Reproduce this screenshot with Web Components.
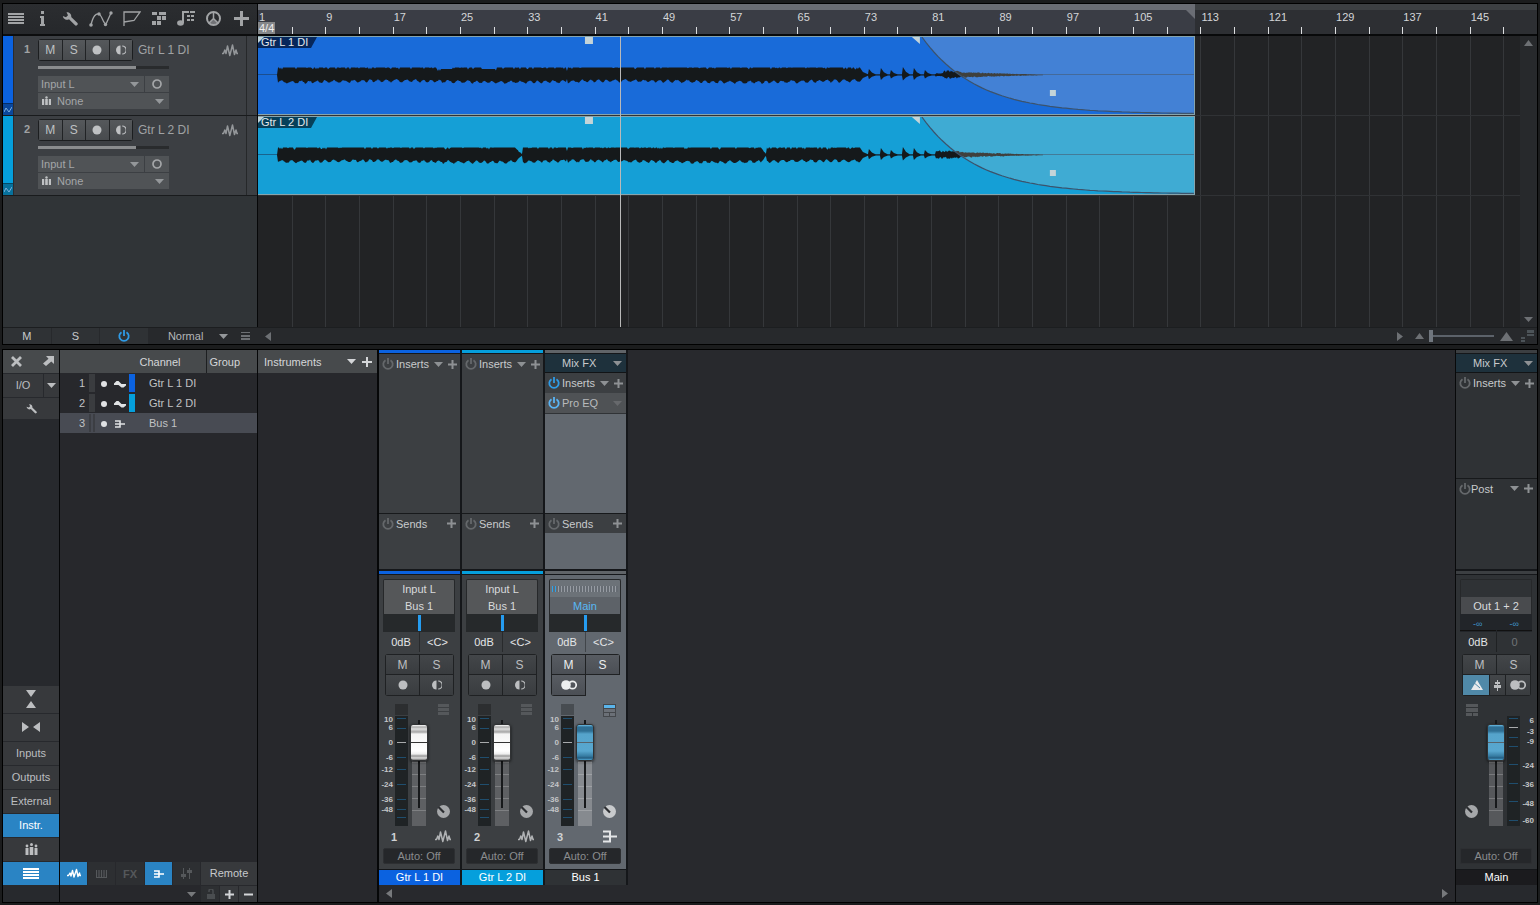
<!DOCTYPE html>
<html lang="en">
<head>
<meta charset="utf-8">
<title>Song – Arrange and Mix</title>
<style>
html, body { margin: 0; height: 100%; background: #1b1c1d; }
body { font: 11px/14px "Liberation Sans", Arial, sans-serif; color: #c8cacc; }
</style>
</head>
<body>
<daw-app></daw-app>
<script>
const RESET = `
*, *::before, *::after { box-sizing: border-box; }
:host { box-sizing: border-box; display: block; }
button, select, input { font: inherit; color: inherit; background: none; border: 0; border-radius: 0; margin: 0; padding: 0; outline: 0; }
button { display: flex; align-items: center; justify-content: center; }
select, input { appearance: none; -webkit-appearance: none; }
`;
function define(name, css, markup, setup) {
  customElements.define(name, class extends HTMLElement {
    connectedCallback() {
      if (this.shadowRoot) return;
      const root = this.attachShadow({ mode: "open" });
      const t = document.createElement("template");
      t.innerHTML = `<style>${RESET}${css}</style>` + (typeof markup === "function" ? markup(this) : markup);
      root.append(t.content.cloneNode(true));
      if (setup) setup(this, root);
    }
  });
}
const attr = (el, n, d = "") => el.getAttribute(n) ?? d;

/* ---------- icons: [width, height, markup] ---------- */
const S = 'fill="none" stroke="currentColor"';
const ICONS = {
  menu: [16, 11, '<path d="M0 0h16v2H0zM0 3h16v2H0zM0 6h16v2H0zM0 9h16v2H0z"/>'],
  info: [5, 15, '<path d="M1 0h3v3H1zM0 5h4v8h1v2H0v-2h1V7H0z"/>'],
  wrench: [16, 15, `<path d="M4.500 1.300A4 4 0 0 1 9.200 6l6 5.700a1.600 1.600 0 0 1-2.400 2.400L7 8.300A4.200 4.200 0 0 1 .800 5L4 6.200 6 4.200z"/>`],
  curve: [24, 16, `<path ${S} stroke-width="1.300" d="M2 14C4 5 7 2 10 3C13 4 14 13 17 13L22 2"/><g><circle cx="2" cy="14" r="1.800"/><circle cx="10" cy="3" r="1.700"/><circle cx="16.500" cy="13.500" r="1.700"/><circle cx="22" cy="2" r="1.700"/></g>`],
  flag: [18, 15, `<path ${S} stroke-width="1.300" d="M1 15V1H17L11 9.500L1 11"/>`],
  pattern: [14, 15, '<path d="M0 1h5v3H0zM7 1h7v3H7zM5 5h4v4H5zM10 5h4v4h-4zM0 10h4v4H0zM5 10h4v4H5z"/>'],
  note: [18, 15, '<ellipse cx="3.500" cy="12" rx="3.400" ry="2.700"/><path d="M5 0h2v12H5zM6 0h4v2H6zM9 0h3v2H9zM13 0h5v2h-5zM10 4h3v2h-3zM14 4h3v2h-3zM10 8h3v2h-3zM14 8h3v2h-3z"/>'],
  dial: [15, 15, `<circle cx="7.500" cy="7.500" r="6.500" ${S} stroke-width="2"/><path ${S} stroke-width="1.500" d="M7.500 1V8M3 12L7.500 7.500L12 12"/><path opacity=".6" d="M7.500 7.500L12 12A6 6 0 0 1 3 12z"/>`],
  plus: [15, 15, '<path d="M6 0h3v6h6v3H9v6H6V9H0V6h6z"/>'],
  plusS: [9, 9, '<path d="M3.500 0h2v3.500H9v2H5.500V9h-2V5.500H0v-2h3.500z"/>'],
  plusT: [10, 10, '<path d="M4 0h2v4h4v2H6v4H4V6H0V4h4z"/>'],
  minus: [9, 9, '<path d="M0 3.500h9v2H0z"/>'],
  wave: [16, 13, `<path ${S} stroke-width="1.500" stroke-linejoin="round" d="M0 9.500H1.500L2.800 6L4 9.500L5.500 2L7.800 11.500L10.500 1L12.500 10.500L14 6L15 9.500H16"/>`],
  waveT: [14, 11, `<path ${S} stroke-width="1.400" stroke-linejoin="round" d="M0 7.500H1.500L3 5L4 8L5.500 2.500L7 9L9.500 1.500L11 8.500L12.500 5L13 7.500H14"/>`],
  waveS: [12, 8, '<path d="M0 3.500L2.500 1H4.500L7.500 4H12V5.500L9.500 7.500H7.500L4.500 5H0z"/>'],
  zig: [8, 8, `<path ${S} stroke-width="1" d="M0 6L2 2L5 6L8 1"/>`],
  dot: [10, 10, '<circle cx="5" cy="5" r="4.500"/>'],
  dotS: [6, 6, '<circle cx="3" cy="3" r="3"/>'],
  half: [10, 10, `<path d="M4.500 .500a4.500 4.500 0 0 0 0 9z"/><path ${S} stroke-width="1.200" d="M6.200 1a4 4 0 0 1 0 8"/>`],
  ring: [10, 10, `<circle cx="5" cy="5" r="4" ${S} stroke-width="1.700"/>`],
  rings: [16, 10, `<circle cx="5" cy="5" r="4.800"/><circle cx="11.500" cy="5" r="3.700" ${S} stroke-width="1.700"/>`],
  people: [9, 10, '<circle cx="4.500" cy="1.500" r="1.200"/><path d="M0 3h2.200v6H0zM3.200 3h2.600v6H3.200zM6.800 3H9v6H6.800z"/>'],
  people2: [13, 12, '<circle cx="2" cy="3" r="1.400"/><circle cx="6.500" cy="1.500" r="1.500"/><circle cx="11" cy="3" r="1.400"/><path d="M.500 5h3v7h-3zM4.700 4h3.600v8H4.700zM9.500 5h3v7h-3z"/>'],
  down: [9, 5, '<path d="M0 0h9L4.500 5z"/>'],
  up: [9, 6, '<path d="M0 6h9L4.500 0z"/>'],
  upL: [13, 9, '<path d="M0 9h13L6.500 0z"/>'],
  left: [6, 9, '<path d="M6 0v9L0 4.500z"/>'],
  right: [6, 9, '<path d="M0 0v9l6-4.500z"/>'],
  power: [12, 12, `<path ${S} stroke-width="1.800" d="M3.500 2.200A4.700 4.700 0 1 0 8.500 2.200M6 0V6"/>`],
  close: [11, 11, `<path ${S} stroke-width="2.800" d="M1 1L10 10M10 1L1 10"/>`],
  arrow: [11, 10, '<path d="M3 0H11V8L8.300 5.500L3 10L0 7.500L5.500 2.700z"/>'],
  bus: [11, 8, `<path ${S} stroke-width="1.600" d="M1 1H6V7H1M1 4H11"/>`],
  busL: [15, 13, `<path ${S} stroke-width="2" d="M1 1.500H8V11.500H1M1 6.500H15"/>`],
  vert: [10, 18, '<path d="M0 0h10L5 7zM0 18h10L5 11z"/>'],
  horz: [18, 10, '<path d="M0 0v10l7-5zM18 0v10l-7-5z"/>'],
  keys: [11, 8, `<path ${S} stroke-width="1.200" d="M.500 0V7.500H10.500V0M3 0V7M5.500 0V7M8 0V7"/>`],
  faders: [13, 11, `<path ${S} stroke-width="1" d="M3.500 0V11M9.500 0V11"/><path d="M1 6h5v3H1zM7 2h5v3H7z"/>`],
  lock: [9, 10, `<path d="M1 5h8v5H1z"/><path ${S} stroke-width="1.500" d="M3 3V2A2 2 0 0 1 7 2V5"/>`],
  list: [9, 8, '<path d="M0 0h9v1H0zM0 3h9v2H0zM0 6h9v2H0z"/>'],
  views: [13, 12, '<path d="M6 0h7v3H6zM6 4h7v2H6zM0 7h4v2H0zM0 10h4v2H0z"/>'],
  rack: [11, 11, '<path d="M0 0h11v3H0zM0 4h11v3H0zM0 8h11v3H0z"/>'],
  rackBus: [13, 13, '<path fill="#44474b" d="M0 0h13v13H0z"/><path fill="#5ab4ea" d="M1 1h11v3H1z"/><path fill="#6b7077" d="M1 5h11v3H1zM1 9h5v3H1zM7 9h5v3H7z"/>'],
  rackMain: [12, 12, '<path d="M0 0h12v3H0zM0 4h12v4H0zM0 9h6v3H0zM7 9h5v3H7z"/>'],
  knob: [13, 13, '<circle cx="6.500" cy="6.500" r="6.500"/><path stroke="#2c2e31" stroke-width="2.200" d="M1.500 2L7 7.500"/>'],
  metro: [13, 10, '<path d="M7 0L13 10H1L4 5z"/><path stroke="#5089a8" d="M2 1L10 8"/>'],
  plug: [7, 11, '<path d="M3 0h1v2h2v2H4v1h3v3H4v3H3V8H0V5h3V4H1V2h2z"/>'],
};
define("daw-icon", `:host{display:inline-flex;flex:none}svg{display:block;fill:currentColor}`, el => {
  const [w, h, m] = ICONS[attr(el, "name")];
  return `<svg width="${w}" height="${h}" viewBox="0 0 ${w} ${h}" aria-hidden="true">${m}</svg>`;
});
const ic = n => `<daw-icon name="${n}"></daw-icon>`;

/* ---------- drop-down with an arrow ---------- */
define("menu-select", `
:host{display:grid;grid-template-columns:1fr auto;align-items:center;height:16px;background:#505356;color:#a4a6a8}
select{grid-area:1/1/2/3;width:100%;height:100%;padding-left:var(--pad,3px)}
daw-icon{grid-area:1/2;margin-right:5px;color:#94979a;pointer-events:none}
.lead{grid-area:1/1;margin-left:4px;justify-self:start;color:#c0c2c4}`,
el => `<select aria-label="${attr(el, "label")}"><option>${attr(el, "value")}</option></select>
${el.hasAttribute("icon") ? `<daw-icon class="lead" name="${attr(el, "icon")}"></daw-icon>` : ""}${ic("down")}`);

/* ---------- arrange: toolbar and track headers ---------- */
define("track-toolbar", `
:host{display:grid;grid-template-columns:26px 27px 27px 35px 27px 28px 26px 28px 28px;align-items:center;height:32px;padding-bottom:1px;background:linear-gradient(#2b2d30,#26282b);border-bottom:2px solid #0c0d0e;color:#a2a4a6}`,
["menu:Menu", "info:Info", "wrench:Tools", "curve:Automation", "flag:Markers", "pattern:Patterns", "note:Score", "dial:Tempo", "plus:Add track"]
  .map(s => s.split(":")).map(([n, l]) => `<button aria-label="${l}">${ic(n)}</button>`).join(""));

define("track-header", `
:host{display:grid;grid-template-columns:10px 25px 1fr 10px;height:80px;background:#3c3f43;border-bottom:1px solid #191b1d}
.color{display:flex;flex-direction:column;justify-content:flex-end;background:var(--c);overflow:hidden}
.color span{display:flex;justify-content:center;align-items:center;height:12px;background:var(--d);color:#7fb0dc;border-top:1px solid #0005}
.num{padding:6px 0 0 10px;font-weight:bold;color:#a0a2a4;border-left:1px solid #2a2c30}
.main{padding-top:3px;border-right:1px solid #26282a}
.top{display:flex;align-items:center;height:22px}
.group{display:flex;gap:1px;background:#212325;border:1px solid #1c1e20;border-radius:3px;width:95px;height:22px}
.group button{flex:1;background:linear-gradient(#55585b,#484b4e);font-size:12px;color:#bfc1c3;padding-bottom:1px}
.name{flex:1;padding-left:5px;font-size:12px;color:#a0a2a4}
.top > daw-icon{margin-right:8px;color:#94979a}
input{display:block;width:131px;height:3px;margin:5px 0 7px;background:linear-gradient(90deg,#8a8c8e 75%,#292b2d 75%)}
input::-webkit-slider-thumb{-webkit-appearance:none;width:1px;height:3px}
.io{display:grid;grid-template-columns:106px 24px;gap:1px;width:131px}
.io menu-select:last-child{grid-column:1/3;--pad:19px}
.io button{background:#505356;color:#a4a6a8}`,
el => `<div class="color"><span>${ic("zig")}</span></div><div class="num">${attr(el, "num")}</div>
<div class="main"><div class="top"><div class="group"><button>M</button><button>S</button><button aria-label="Record">${ic("dot")}</button><button aria-label="Monitor">${ic("half")}</button></div>
<span class="name">${attr(el, "name")}</span>${ic("wave")}</div>
<input type="range" value="75" aria-label="Volume">
<div class="io"><menu-select label="Input" value="Input L"></menu-select><button aria-label="Mono">${ic("ring")}</button><menu-select label="Group" value="None" icon="people"></menu-select></div></div>`);

/* ---------- timeline ---------- */
const STEPS = 38;
define("time-ruler", `
:host{display:grid;grid-template:6px 26px/minmax(0,1fr);height:32px;overflow:hidden;background:#2e3033;border-bottom:2px solid #08090a;position:relative}
.range{background:#3c3f42}
.range i{display:block;width:73.250%;height:6px;background:#6a6d74}
.ticks{display:grid;grid-template-columns:repeat(${STEPS},minmax(0,1fr));background:linear-gradient(90deg,#3a3d45 73.250%,#2d2f33 73.250%)}
.ticks div{position:relative;padding-left:1px;white-space:nowrap;color:#d4d6d8;line-height:14px}
.ticks div::before{content:"";position:absolute;left:0;bottom:0;width:1px;height:9px;background:#dcdee0}
.sig{position:absolute;left:0;bottom:0;width:17px;height:12px;padding-left:1px;background:#858789;color:#f0f0f0;line-height:12px}
.end{position:absolute;left:calc(73.250% - 9px);top:6px;border-top:9px solid #6a6d74;border-left:9px solid transparent}`,
`<div class="range"><i></i></div><div class="ticks">${Array.from({ length: STEPS }, (_, i) => `<div>${i % 2 ? "" : i * 4 + 1}</div>`).join("")}</div><span class="sig">4/4</span><span class="end"></span>`);

/* Loudness envelopes: [x, upper, lower] in clip units */
function wavePath(variant) {
  let seed = variant * 7919 + 13;
  const rnd = () => (seed = (seed * 16807) % 2147483647) / 2147483647;
  const up = [], lo = [], mid = 38;
  const add = (x, a, b) => { up.push(`${x} ${(mid - a).toFixed(1)}`); lo.unshift(`${x} ${(mid + b).toFixed(1)}`); };
  add(19, 0, 0);
  for (let x = 20; x <= 602; x += 1) {
    let a = 7.5 - (rnd() > .8 ? 2 * rnd() : 0), b = 6.4 + Math.sin(x / 1.4 + Math.sin(x / 9)) * 1.3 + Math.sin(x / 37 + variant) * .7 + rnd() * 1.3 - .6;
    if (variant === 1 && (x > 170 && x < 262) && Math.sin(x / 7) > .5) a -= 1.5;
    if (variant === 2 && ((x > 257 && x < 265) || (x > 503 && x < 509))) { const k = x < 300 ? (265 - x) / 8 : (509 - x) / 6; a *= k; b *= k; }
    if (x === 309) { a = 4; b = 4; }
    add(x, a, b);
  }
  add(605, 3, 3); add(610, .8, .8);
  for (const [x, h] of [[611, 6], [623, 7], [633, 5], [645, 8], [656, 7], [667, 5]]) { add(x - 1, .5, .5); add(x, h, h * .7); add(x + 3, h * .4, h * .3); add(x + 7, .4, .4); }
  add(677, .5, .5);
  for (let x = 678; x < 786; x++) {
    let h = x < 686 ? (variant === 1 ? 2 : 4.5) : x < 702 ? 4.2 : 3.2 * (1 - (x - 702) / 90);
    add(x, Math.max(.3, h * (.6 + rnd() * .5)), Math.max(.3, h * (.4 + rnd() * .5)));
  }
  return `M${up.join("L")}L${lo.join("L")}Z`;
}
function fadePoints() {
  const p = [];
  for (let x = 0; x <= 272; x += 4) p.push(`${664 + x} ${(77 * (1 - Math.exp(-.018 * x))).toFixed(1)}`);
  return p.join("L");
}
define("audio-clip", `
:host{position:relative;height:79px;background:var(--c);border:1px solid #86a4ad;border-width:1px 1px 1px 0}
svg{display:block;width:100%;height:77px}
span{position:absolute;left:0;top:0;width:59px;height:11px;padding-left:3px;line-height:10px;background:var(--d);color:#e4e8ea;clip-path:polygon(0 0,100% 0,53px 100%,0 100%)}
b{position:absolute;left:0;top:0;border-top:6px solid #c4d4d8;border-right:6px solid transparent}`,
el => { const f = fadePoints(); return `<svg viewBox="0 0 936 77" preserveAspectRatio="none" aria-hidden="true">
<path d="M0 37.500H936" stroke="#1c3a5c" stroke-opacity=".6"/>
<path d="${wavePath(+attr(el, "num"))}" fill="#15191b"/>
<path d="M${f}L936 0Z" fill="#ecdeca" fill-opacity=".2"/>
<path d="M${f}" fill="none" stroke="#3c536c" stroke-width="1.200"/>
<path d="M327 0h8v7h-8zM654 0h8v7zM792 53h6v6h-6z" fill="#c4d4d8"/></svg><span>${attr(el, "name")}</span><b></b>`; });

define("arrange-view", `
:host{display:grid;grid-template-columns:minmax(0,1fr) 17px;flex:1;min-width:0;min-height:291px;background:#222325}
.clipbox{position:relative;overflow:hidden}
.field{position:relative;width:calc(100% + 17px);height:100%;display:flex;flex-direction:column}
.lines{position:absolute;inset:0;display:grid;grid-template-columns:repeat(${STEPS},minmax(0,1fr))}
.lines i{border-left:1px solid #35373a}
.lines i:first-child{border:0}
.lane{position:relative;height:80px;border-bottom:1px solid #303235}
.lane audio-clip{width:73.250%}
.head{position:absolute;left:28.300%;top:0;bottom:0;width:1px;background:#b9b9b9}
.bar{display:flex;flex-direction:column;justify-content:space-between;align-items:center;padding:4px 0 5px;background:#27292c;color:#6d7074}`,
`<div class="clipbox"><div class="field"><div class="lines">${"<i></i>".repeat(STEPS)}</div>
<div class="lane"><audio-clip num="1" name="Gtr L 1 DI" style="--c:#196bd9;--d:#06275b"></audio-clip></div>
<div class="lane"><audio-clip num="2" name="Gtr L 2 DI" style="--c:#159fd6;--d:#06405a"></audio-clip></div><div class="head"></div></div></div>
<div class="bar"><button aria-label="Scroll up">${ic("up")}</button><button aria-label="Scroll down">${ic("down")}</button></div>`);

define("arrange-footer", `
:host{display:flex;height:17px;background:#27292c;border-top:1px solid #1c1e20}
.left{display:flex;width:255px;flex:none}
.left button{width:48px;margin-right:1px;background:#2f3235;color:#c8cacc}
.left button.on{color:#2f9be6}
menu-select{width:85px;background:none;--pad:19px;height:16px;color:#b4b6b8}
.left button.v{width:24px;background:none;color:#6d7074}
.right{display:flex;flex:1;align-items:center;color:#6d7074;padding:0 3px 0 7px}
.sp{flex:1}
.zoom{width:65px;height:12px;margin:0 6px 0 5px;background:linear-gradient(#5c626a,#5c626a) 0 5px/100% 2px no-repeat}
.zoom::-webkit-slider-thumb{-webkit-appearance:none;width:4px;height:12px;background:#70767e}
.vw{margin-left:8px;color:#4c5358}.rt{margin-right:12px}`,
`<div class="left"><button>M</button><button>S</button><button class="on" aria-label="Power">${ic("power")}</button><menu-select label="Automation mode" value="Normal"></menu-select><button class="v" aria-label="Track list">${ic("list")}</button></div>
<div class="right"><button aria-label="Scroll left">${ic("left")}</button><span class="sp"></span><button class="rt" aria-label="Scroll right">${ic("right")}</button>${ic("up")}<input class="zoom" type="range" value="0" aria-label="Zoom">${ic("upL")}<button class="vw" aria-label="Views">${ic("views")}</button></div>`);

/* ---------- mixer: side navigation and channel list ---------- */
define("mixer-nav", `
:host{display:flex;flex-direction:column;gap:1px;width:57px;background:#27292d;border-right:1px solid #060708;padding-bottom:17px}
button{height:23px;padding-bottom:1px;background:#37393c;color:#bcbec0}
.row{display:flex;gap:1px}
.row button:first-child{flex:1}
.row.a{background:#474a4c;justify-content:space-between}
.row.a button{flex:none;width:26px;background:none}.a button:last-child{width:22px}
.b button:last-child{width:15px}
.tall{height:27px}.short{height:21px}
.sp{flex:1}
.on{background:#2a84c4;color:#fff}`,
`<div class="row a"><button aria-label="Close">${ic("close")}</button><button aria-label="Detach">${ic("arrow")}</button></div>
<div class="row b"><button>I/O</button><button aria-label="I/O menu">${ic("down")}</button></div>
<button class="short" aria-label="Options"><svg width="11" height="11" viewBox="0 0 16 15" fill="currentColor"><path d="M4.500 1.300A4 4 0 0 1 9.200 6l6 5.700a1.600 1.600 0 0 1-2.400 2.400L7 8.300A4.200 4.200 0 0 1 .800 5L4 6.200 6 4.200z"/></svg></button>
<span class="sp"></span>
<button class="tall" aria-label="Narrow height">${ic("vert")}</button><button class="tall" aria-label="Narrow width">${ic("horz")}</button>
<button>Inputs</button><button>Outputs</button><button>External</button><button class="on">Instr.</button><button aria-label="Groups">${ic("people2")}</button><button class="on" aria-label="Channel list">${ic("menu")}</button>`);

define("channel-list", `
:host{display:flex;flex-direction:column;width:198px;background:#27282c;border-right:1px solid #060708}
table{border-collapse:collapse;width:100%;table-layout:fixed}
th,td{padding:0;text-align:left;font-weight:normal;height:20px}
thead tr{background:#474a4c}
th{height:23px;color:#d4d6d8}
th.ch{text-align:right;padding-right:25px;border-right:1px solid #1d1f21}
th.g{padding-left:3px}
td.n{text-align:right;padding-right:4px}
td.m span{display:block;width:6px;height:18px;background:#3a3c3f}
td .c{display:block;width:6px;height:18px;background:var(--c)}
td{color:#c0c2c4}
td daw-icon{vertical-align:middle;color:#e0e2e4}
tr.sel{background:#484b53}
.sel .m span{border:solid #3c3e43;border-width:0 2px;background:none}
.sp{flex:1}
.f{display:flex;gap:1px;height:23px}
.f button{flex:1;background:#2d2f32;color:#55585b;font-weight:bold}
.f button.on{background:#2a84c4;color:#fff}
.f button.r{flex:0 0 56px;background:#37393c;color:#c8cacc;font-weight:normal;padding-bottom:1px}
.z{display:flex;gap:1px;height:17px;justify-content:flex-end;padding-top:1px}
.z button{width:18px;background:#37393c;color:#d4d6d8}
.z button.d{background:none;color:#77797c}.z button.k{background:#2d2f32;color:#4a4d50}`,
`<table><colgroup><col style="width:29px"><col style="width:12px"><col style="width:13px"><col style="width:15px"><col style="width:20px"><col style="width:57px"><col></colgroup>
<thead><tr><th class="ch" colspan="6">Channel</th><th class="g">Group</th></tr></thead><tbody>
<tr><td class="n">1</td><td class="m"><span></span></td><td>${ic("dotS")}</td><td>${ic("waveS")}</td><td><span class="c" style="--c:#0b62e0"></span></td><td colspan="2">Gtr L 1 DI</td></tr>
<tr><td class="n">2</td><td class="m"><span></span></td><td>${ic("dotS")}</td><td>${ic("waveS")}</td><td><span class="c" style="--c:#059fdc"></span></td><td colspan="2">Gtr L 2 DI</td></tr>
<tr class="sel"><td class="n">3</td><td class="m"><span></span></td><td>${ic("dotS")}</td><td>${ic("bus")}</td><td></td><td colspan="2">Bus 1</td></tr></tbody></table>
<span class="sp"></span>
<div class="f"><button class="on" aria-label="Audio tracks">${ic("waveT")}</button><button aria-label="Instruments">${ic("keys")}</button><button>FX</button><button class="on" aria-label="Buses">${ic("bus")}</button><button aria-label="VCA">${ic("faders")}</button><button class="r">Remote</button></div>
<div class="z"><button class="d" aria-label="Scenes">${ic("down")}</button><button class="k" aria-label="Lock">${ic("lock")}</button><button aria-label="Add">${ic("plusS")}</button><button aria-label="Remove">${ic("minus")}</button></div>`);

define("instrument-panel", `
:host{width:121px;background:#27282c;border-right:2px solid #060708}
header{display:flex;align-items:center;height:23px;padding:0 5px 0 6px;background:#474a4c;color:#d4d6d8}
span{flex:1}button + button{margin-left:6px}`,
`<header><span>Instruments</span><button aria-label="Instrument menu">${ic("down")}</button><button aria-label="Add instrument">${ic("plusT")}</button></header>`);

/* ---------- mixer: strips ---------- */
define("slot-row", `
:host{display:flex;align-items:center;height:19px;padding:0 4px 0 3px;background:var(--row,#3c3f42);color:#c8cacc}
.p{color:var(--p,#65686b);margin-right:2px}
.t{flex:1;text-align:left}
.r{color:#8e9194;margin-left:5px}
:host([kind=ins]){height:20px}
:host([kind=fx]){height:19px;padding:0 4px 0 17px;background:#1e313c;border-bottom:1px solid #121416}
:host([kind=plug]){height:21px;background:#4f5255;border-bottom:1px solid #303336;color:#b8babc}
:host([kind=plug]) .r{color:#67696c}
:host([kind=post]) .p{margin-right:0}`,
el => {
  const k = attr(el, "kind"), t = attr(el, "text");
  return (k === "fx" ? "" : `<button class="p" aria-label="${t} on">${ic("power")}</button>`) + `<span class="t">${t}</span>` +
    (t === "Sends" ? "" : `<button class="r" aria-label="${t} menu">${ic("down")}</button>`) +
    (k === "fx" || k === "plug" ? "" : `<button class="r" aria-label="Add to ${t}">${ic("plusS")}</button>`);
});

/* vertical fader with its meter scale */
const CH_SCALE = [[719, "10"], [727, "6"], [742, "0"], [757, "-6"], [769, "-12"], [784, "-24"], [799, "-36"], [809, "-48"]];
const MAIN_SCALE = [[720, "6"], [731, "-3"], [741, "-9"], [765, "-24"], [784, "-36"], [803, "-48"], [820, "-60"]];
define("level-fader", `
:host{display:grid;grid-template-columns:26px 20px 1fr;height:122px}
svg{display:block;overflow:visible}
text{font-size:8px;font-weight:bold;fill:#c4c6c8}
.f{position:relative;display:flex;justify-content:center;align-items:flex-start}
.f::before{content:"";position:absolute;left:3px;top:24px;bottom:0;width:14px;background:repeating-linear-gradient(#0000 0 11px,#fff3 11px 12px) 0 23px/14px 60px no-repeat,var(--slot,#5e6063)}
.f::after{content:"";position:absolute;left:9px;top:16px;height:88px;width:2px;background:#17191b}
input{position:relative;z-index:1;writing-mode:vertical-lr;direction:rtl;width:18px;height:88px;margin-top:16px}
input::-webkit-slider-thumb{-webkit-appearance:none;width:18px;height:37px;border:1px solid #303234;border-radius:3px;background:var(--cap);box-shadow:0 1px 3px #000a}
.s{display:flex;flex-direction:column;justify-content:space-between;align-items:center;padding:0 0 8px 3px;color:#55585b}
.s daw-icon:last-child{color:var(--knob,#a6a8aa)}
:host([main]) .s{padding:0 3px 8px 0}`,
el => {
  const main = el.hasAttribute("main");
  const ticks = main ? [718, 727, 737, 746, 764, 783, 801, 820] : [718, 728, 742, 757, 769, 784, 799, 809, 817];
  const mx = main ? 1 : 12;
  const svg = `<svg width="25" height="122" viewBox="0 0 25 122">${main ? "" : `<path fill="#0004" d="M${mx} 0h13v11h-13z"/>`}
<path fill="#1f2325" d="M${mx} 12h13v110h-13z"/>${ticks.map(y => `<path d="M${mx + 2} ${y - 703.5}h9" stroke="${y === (main ? 727 : 742) ? "#a8aaac" : "#1f4e6e"}"/>`).join("")}
${(main ? MAIN_SCALE : CH_SCALE).map(([y, s]) => `<text x="${main ? 28 : 10}" y="${y - 701}" text-anchor="end">${s}</text>`).join("")}</svg>`;
  const fader = `<div class="f"><input type="range" value="92" aria-label="Level"></div>`;
  const side = `<div class="s">${ic(attr(el, "rack", "rack"))}${ic("knob")}</div>`;
  return main ? side + fader + svg : svg + fader + side;
});

const WHITE_CAP = "linear-gradient(#0000 17px,#333 17px 18px,#0000 18px),linear-gradient(#fff 0,#aaa 2px,#ddd 4px,#a5a5a5 7px,#f4f4f4 9px,#fff 26px,#eee 29px,#999 31px,#ddd 33px,#777 35px)";
const BLUE_CAP = "linear-gradient(#0000 17px,#56636c 17px 18px,#0000 18px),linear-gradient(#6cc0ea 0,#2f6f94 2px,#2f6f94 6px,#55a4cc 9px,#58a7cf 26px,#377da3 31px,#245d80 33px,#4da5d2 35px)";
define("channel-strip", `
:host{display:flex;flex-direction:column;width:83px;flex:none;padding-right:2px;background:#15171a;margin-bottom:17px;--bg:#3c3f42}
:host([kind=bus]){--bg:#62686f;--slot:#868a8f;--knob:#c8cacc}
:host([kind=main]){--bg:#2f3235;--row:#2f3235;--slot:#56585b;width:81px;padding-right:0}
.bar{height:3px;background:var(--c)}
.fx{margin-top:1px;background:var(--bg)}
.ins{flex:1;min-height:0}
.snd{height:56px;border-top:1px solid #17191b;margin-top:0}
:host([kind=main]) .snd{height:91px}
.bar.two{margin-top:2px}
.body{margin-top:1px;padding:4px 5px 4px 4px;background:var(--bg);height:294px;display:flex;flex-direction:column}
.route{border:1px solid #26282a;border-bottom:0;border-radius:2px 2px 0 0;height:35px;background:#fff1}
.route select{display:block;width:100%;height:17px;text-align:center;text-align-last:center;background:#fff1;color:#d8dadc}
.route .e{height:17px;background:var(--bg)}
:host([kind=bus]) select{color:#58b8f4;background:#0002}
.led{height:17px;padding:6px 2px 5px}
.led::before{content:"";display:block;height:6px;background:repeating-linear-gradient(90deg,#0000 0 1px,#666c73 1px 3px),linear-gradient(90deg,#2ea2e8 6px,#979ca3 6px)}
.pan{height:18px;background:#26292b}
.pan input{display:block;width:100%;height:18px}
.pan input::-webkit-slider-thumb{-webkit-appearance:none;width:3px;height:16px;background:#259cf0}
.inf{display:grid;grid-template-columns:1fr 1fr;height:18px;background:#222529;color:#3f93c8;text-align:center;gap:1px}
.inf span{height:17px;line-height:20px;font-size:9px;border-bottom:1px solid #111}
.val{display:grid;grid-template-columns:1fr 1fr;height:19px;text-align:center;line-height:20px;color:#e4e6e8}
.val span + span{border-left:1px solid #0005}
:host([kind=main]) .val span + span{color:#707376}
.btn{display:grid;grid-template-columns:1fr 1fr;grid-template-rows:19px 20px;gap:1px;width:69px;margin:3px 0 0 2px;height:42px;padding:1px;border-radius:3px;background:#1f2123}
.btn button{background:linear-gradient(#434649,#393c3f);color:#bcbec0}
.btn button.l{font-size:12px}
:host([kind=bus]) .btn{clip-path:polygon(0 0,100% 0,100% 21px,35px 21px,35px 100%,0 100%)}
:host([kind=bus]) .btn button{background:linear-gradient(#585c62,#4b4f55);color:#eceeef}
.btn .tri{grid-column:1/3;display:grid;grid-template-columns:26px 15px 1fr;gap:1px}
.btn .tri button:first-child{background:#5089a8;color:#e8eaec}
level-fader{margin:8px 0 0}
.foot{display:flex;align-items:center;justify-content:space-between;height:19px;padding:2px 4px 0 8px;font-weight:bold;color:#d0d2d4}
.foot daw-icon{color:#b0b2b4}
:host([kind=bus]) .foot daw-icon{color:#e4e6e8}
.auto{width:72px;height:16px;margin-top:3px;background:#25272a;color:#8a8c8e;border:1px solid #2d2f32;border-radius:2px}
.name{height:15px;margin-top:1px;background:var(--n);color:#fff;text-align:center;line-height:15px}`,
el => {
  const k = attr(el, "kind"), bus = k === "bus", main = k === "main", ch = !bus && !main;
  return `<div class="bar"></div>
<div class="fx ins">${ch ? "" : `<slot-row kind="fx" text="Mix FX"></slot-row>`}<slot-row kind="ins" text="Inserts" ${bus ? 'style="--p:#2f9be6"' : ""}></slot-row>${bus ? `<slot-row kind="plug" text="Pro EQ" style="--p:#5ab4f4"></slot-row>` : ""}</div>
<div class="fx snd"><slot-row text="${main ? "Post" : "Sends"}" ${main ? 'kind="post"' : ""}></slot-row></div>
<div class="bar two"></div>
<div class="body"><div class="route">${ch ? `<select aria-label="Input"><option>Input L</option></select>` : bus ? `<div class="led"></div>` : `<div class="e"></div>`}<select aria-label="Output"><option>${ch ? "Bus 1" : bus ? "Main" : "Out 1 + 2"}</option></select></div>
${main ? `<div class="inf"><span>-∞</span><span>-∞</span></div>` : `<div class="pan"><input type="range" value="50" aria-label="Pan"></div>`}
<div class="val"><span>0dB</span><span>${main ? "0" : "&lt;C&gt;"}</span></div>
<div class="btn"><button class="l">M</button><button class="l">S</button>${ch ? `<button aria-label="Record">${ic("dot")}</button><button aria-label="Monitor">${ic("half")}</button>` : bus ? `<button aria-label="Channel mode">${ic("rings")}</button>` : `<div class="tri"><button aria-label="Metronome">${ic("metro")}</button><button aria-label="Click level">${ic("plug")}</button><button aria-label="Channel mode">${ic("rings")}</button></div>`}</div>
<level-fader ${main ? 'main rack="rackMain"' : bus ? 'rack="rackBus"' : ""} style="--cap:${ch ? WHITE_CAP : BLUE_CAP}"></level-fader>
<div class="foot">${main ? "" : `<span>${attr(el, "num")}</span>${ic(bus ? "busL" : "wave")}`}</div>
<button class="auto">Auto: Off</button></div>
<div class="name">${attr(el, "name")}</div>`;
});

define("mixer-scroll", `
:host{display:flex;justify-content:space-between;align-items:center;height:17px;padding:0 7px;color:#77797c}`,
`<button aria-label="Scroll left">${ic("left")}</button><button aria-label="Scroll right">${ic("right")}</button>`);

/* ---------- shell ---------- */
define("daw-app", `
:host{display:flex;flex-direction:column;min-height:100vh;padding:3px 2px 2px;background:#1b1c1d;gap:4px}
.arr{border:1px solid #000;min-width:0}
.top{display:flex}
.heads{width:255px;flex:none;display:flex;flex-direction:column;background:#303437;border-right:1px solid #060708}
.time{flex:1;min-width:0;display:flex;flex-direction:column}
.mix{flex:1;display:flex;border:1px solid #000;background:#28292d;min-height:553px}
.mid{flex:1;min-width:0;display:flex;flex-direction:column;position:relative}
.strips{flex:1;display:flex}
.mid mixer-scroll{margin-top:-17px}
.master{display:flex;border-left:1px solid #08090a;background:#27292d}`,
`<section class="arr"><div class="top"><div class="heads"><track-toolbar></track-toolbar>
<track-header num="1" name="Gtr L 1 DI" style="--c:#0b62e0;--d:#0a479c"></track-header>
<track-header num="2" name="Gtr L 2 DI" style="--c:#059fdc;--d:#07719c"></track-header></div>
<div class="time"><time-ruler></time-ruler><arrange-view></arrange-view></div></div>
<arrange-footer></arrange-footer></section>
<section class="mix"><mixer-nav></mixer-nav><channel-list></channel-list><instrument-panel></instrument-panel>
<div class="mid"><div class="strips">
<channel-strip num="1" name="Gtr L 1 DI" style="--c:#0b62e0;--n:#0b62e0"></channel-strip>
<channel-strip num="2" name="Gtr L 2 DI" style="--c:#059fdc;--n:#059fdc"></channel-strip>
<channel-strip kind="bus" num="3" name="Bus 1" style="--c:#606468;--n:#2f3235"></channel-strip></div><mixer-scroll></mixer-scroll></div>
<div class="master"><channel-strip kind="main" name="Main" style="--c:#3c3f42;--n:#1b1b1e"></channel-strip></div></section>`);
</script>
</body>
</html>
